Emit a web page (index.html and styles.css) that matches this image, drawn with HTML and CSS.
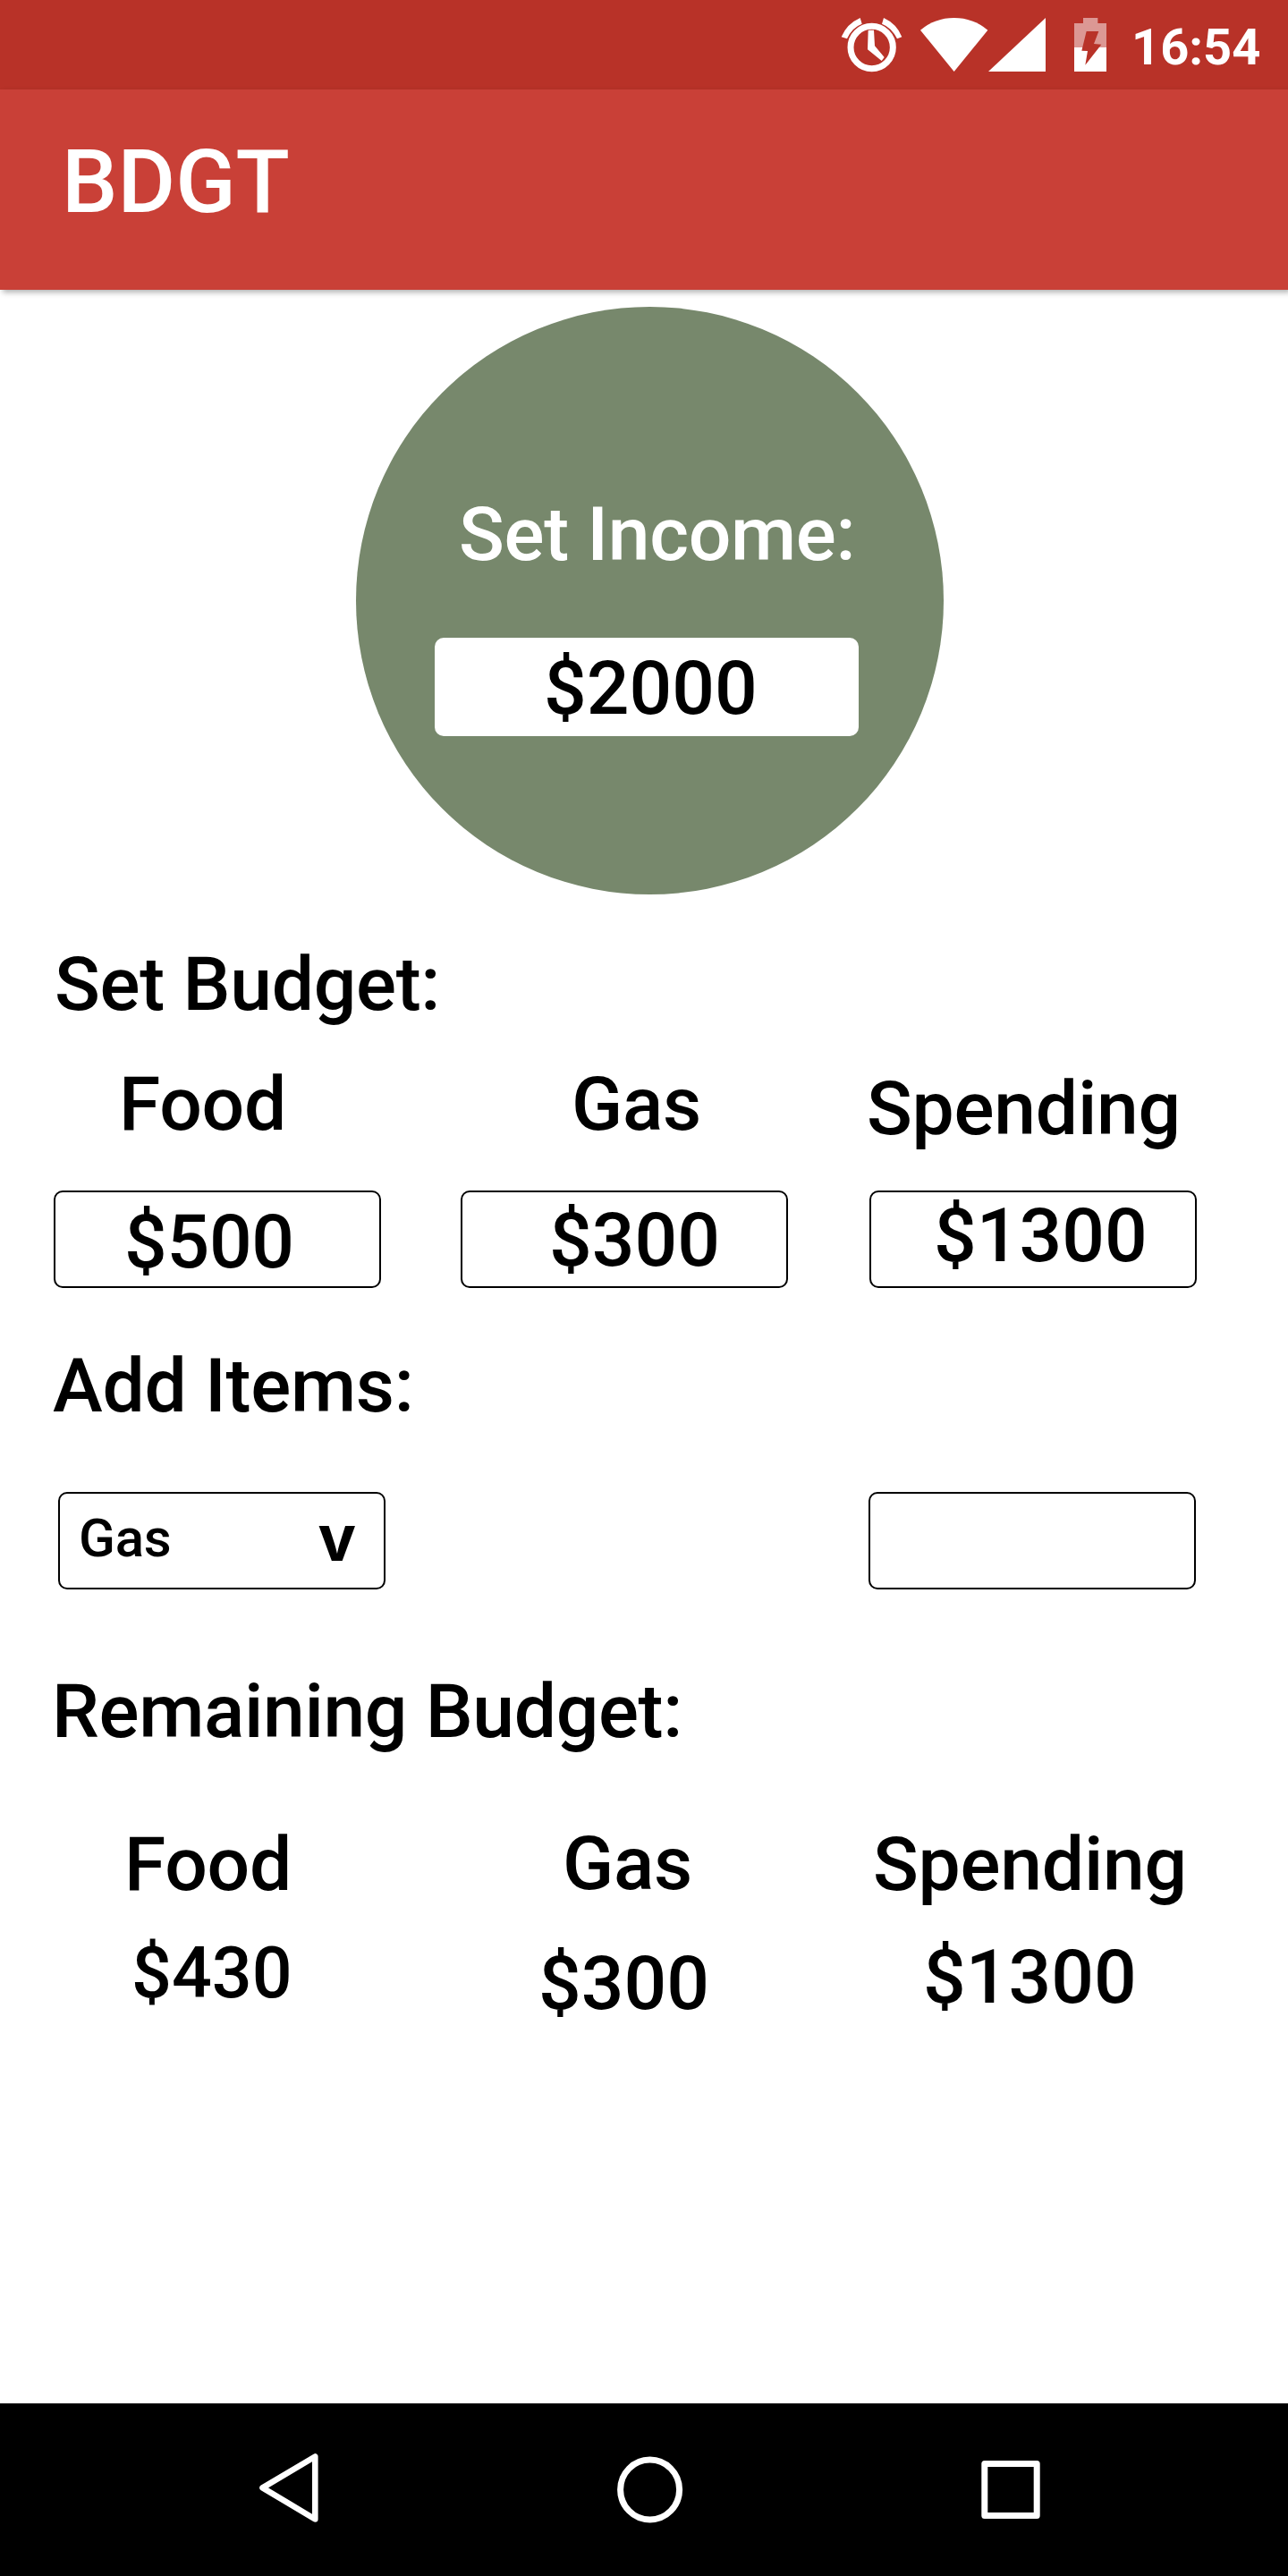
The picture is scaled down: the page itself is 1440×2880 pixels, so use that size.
FILE: index.html
```html
<!DOCTYPE html>
<html lang="en">
<head>
<meta charset="utf-8">
<title>BDGT</title>
<link rel="stylesheet" href="styles.css">
</head>
<body>
<div class="status">
  <svg class="status-icons" width="300" height="100" viewBox="60 0 900 300" aria-hidden="true">
    <circle cx="164" cy="159" r="71" fill="none" stroke="#fff" stroke-width="21"/>
    <path fill="#fff" d="M152 101H171L174 154L206 192L197 204L150 166Z"/>
    <path fill="#fff" d="M62 124Q80 80 125 60L131 80Q98 92 81 130Z"/>
    <path fill="#fff" d="M265 124Q248 80 204 60L198 80Q230 92 249 130Z"/>
    <path fill="#fff" d="M327 101Q376 60 440 60T553 101L440 240Z"/>
    <path fill="#fff" d="M747 60V240H555Z"/>
    <path fill="#dc9894" d="M873 60H922V78H951V159H843V78H873Z"/>
    <path fill="#fff" d="M843 159H951V240H843Z"/>
    <path fill="#b83228" d="M884 105H925L909 147L934 149L880 218L888 171L868 170Z"/>
  </svg>
  <span class="clock">16:54</span>
</div>
<header class="appbar"><h1 class="brand">BDGT</h1></header>
<main class="content">
  <section class="income">
    <div class="income-label">Set Income:</div>
    <div class="income-field">$2000</div>
  </section>
  <h2 class="title set-title">Set Budget:</h2>
  <div class="row names">
    <span class="food">Food</span>
    <span class="gas">Gas</span>
    <span class="spending">Spending</span>
  </div>
  <div class="row fields">
    <div class="box food">$500</div>
    <div class="box gas">$300</div>
    <div class="box spending">$1300</div>
  </div>
  <h2 class="title add-title">Add Items:</h2>
  <div class="row add">
    <div class="box select"><span class="choice">Gas</span><span class="arrow">v</span></div>
    <div class="box amount"></div>
  </div>
  <h2 class="title remain-title">Remaining Budget:</h2>
  <div class="row left-names">
    <span class="food">Food</span>
    <span class="gas">Gas</span>
    <span class="spending">Spending</span>
  </div>
  <div class="row left-values">
    <span class="food">$430</span>
    <span class="gas">$300</span>
    <span class="spending">$1300</span>
  </div>
</main>
<nav class="navbar">
  <svg width="1440" height="193" viewBox="0 0 1440 193" fill="none" stroke="#fff" stroke-width="7" stroke-linejoin="round" aria-hidden="true">
    <path stroke-width="6.6" d="M352.3 59.5V129.5L293.5 94.3Z"/>
    <ellipse cx="726.6" cy="96.5" rx="33" ry="33.4"/>
    <rect x="1100.8" y="67.5" width="58.4" height="58"/>
  </svg>
</nav>
</body>
</html>
```
FILE: styles.css
```css
* { box-sizing: border-box; }

body {
  margin: 0;
  width: 1440px;
  height: 2880px;
  display: flex;
  flex-direction: column;
  background: #fff;
  color: #000;
  font: 500 84px/99px Roboto, sans-serif;
}

.status {
  height: 100px;
  display: flex;
  justify-content: flex-end;
  padding-right: 29px;
  background: #b83228;
  color: #fff;
}
.status-icons { display: block; flex: none; }
.clock {
  width: 171px;
  padding: 20px 0 0 25px;
  font-size: 56px;
  font-weight: 700;
  line-height: 66px;
}

.appbar {
  height: 224px;
  padding: 45px 0 0 69px;
  background: #c94037;
  color: #fff;
  box-shadow: 3px 3px 6px rgba(0, 0, 0, .3);
}
.brand { margin: 0; font-size: 99px; font-weight: 500; line-height: 116px; }

.content { flex: 1; }

.income {
  width: 657px;
  height: 657px;
  margin: 19px 0 0 398px;
  padding-top: 205px;
  border-radius: 50%;
  background: #77886c;
}
.income-label { padding-left: 115px; color: #fff; letter-spacing: -.35px; }
.income-field {
  width: 474px;
  height: 110px;
  margin: 66px 0 0 88px;
  padding: 7px 0 0 122px;
  border-radius: 10px;
  background: #fff;
}

.title { margin: 0; font-size: 84px; font-weight: 500; letter-spacing: -.3px; }
.set-title { margin-top: 51px; padding-left: 61px; }
.add-title { margin-top: 60px; padding-left: 59px; }
.remain-title { margin-top: 87px; padding-left: 58px; letter-spacing: -.35px; }

.row {
  display: grid;
  grid-template-columns: 455px 457px 368px;
  align-items: start;
  padding-left: 60px;
}

.names { margin-top: 35px; letter-spacing: -.25px; }
.names .food { padding-left: 73px; }
.names .gas { padding-left: 124px; }
.names .spending { margin: 5px 0 0 -3px; }

.box { width: 366px; height: 109px; border: 2px solid #000; border-radius: 10px; }
.fields { margin-top: 42px; }
.fields .food { padding: 6px 0 0 77px; letter-spacing: -.3px; }
.fields .gas { padding: 4px 0 0 97px; }
.fields .spending { padding-left: 70px; line-height: 97px; }

.add { grid-template-columns: 911px 368px; margin-top: 69px; }
.select {
  display: flex;
  justify-content: space-between;
  align-items: flex-start;
  margin-left: 5px;
  padding: 0 31px 0 21px;
}
.choice { padding-top: 14px; font-size: 60px; line-height: 71px; letter-spacing: -.2px; }
.arrow { padding-top: 9px; font: 700 71px/80px Inter, sans-serif; }

.left-names { margin-top: 71px; letter-spacing: -.25px; }
.left-names .food { padding: 1px 0 0 79px; }
.left-names .gas { padding-left: 114px; }
.left-names .spending { padding: 1px 0 0 4px; }

.left-values { margin-top: 26px; }
.left-values .food { padding-left: 87px; font-size: 79px; line-height: 92px; }
.left-values .gas { padding: 8px 0 0 87px; }
.left-values .spending { padding: 1px 0 0 60px; }

.navbar { height: 193px; background: #000; }
.navbar svg { display: block; }
```
